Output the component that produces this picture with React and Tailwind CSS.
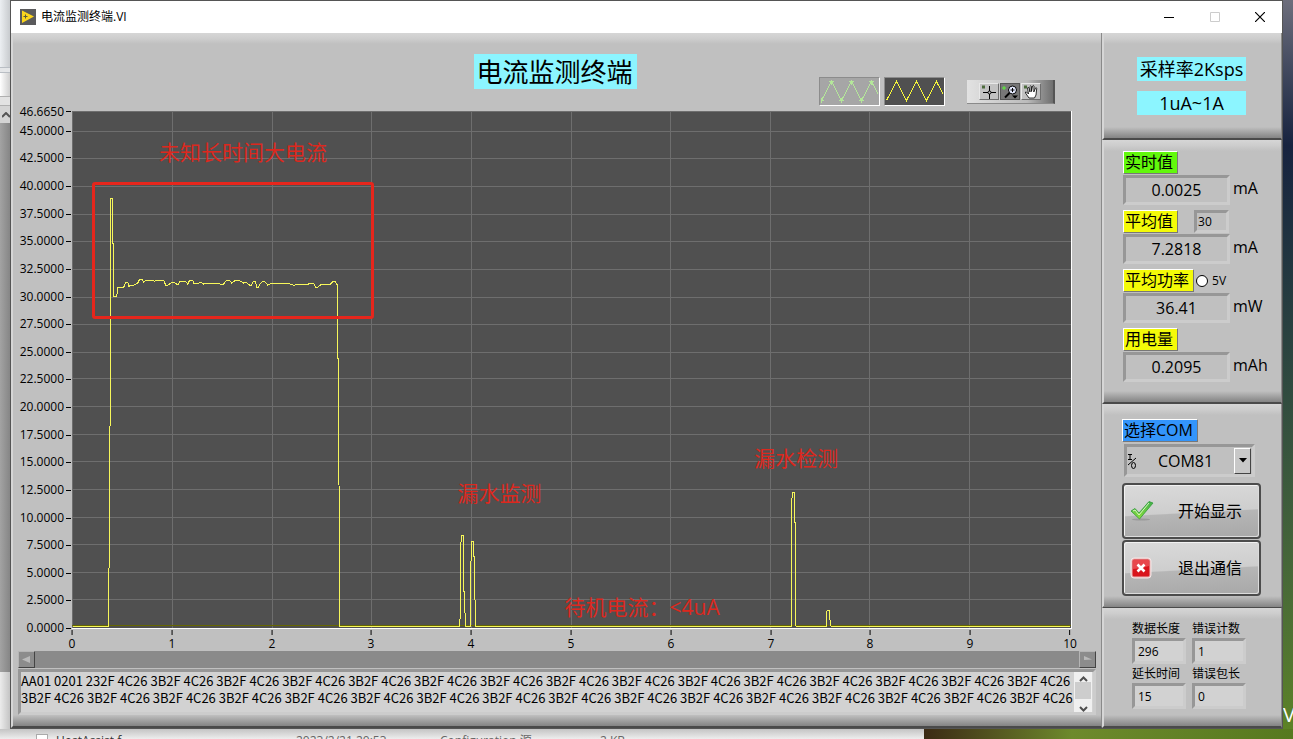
import React, { useState } from "react";

const PLOT_W = 1000;
const PLOT_H = 518;
const Y_TICKS = [
  46.665, 45, 42.5, 40, 37.5, 35, 32.5, 30, 27.5, 25, 22.5, 20, 17.5, 15, 12.5,
  10, 7.5, 5, 2.5, 0,
];
const X_TICKS = [0, 1, 2, 3, 4, 5, 6, 7, 8, 9, 10];

const plotX = (v) => Math.round(v * 99.8);
const plotY = (v) => Math.round(517 - v * 11.05);
const pctX = (x) => `${(x / PLOT_W) * 100}%`;
const pctY = (y) => `${(y / PLOT_H) * 100}%`;

const TRACE = [
  "0,516 36,516 36,494 38,210 38,87 40,87 40,132 41,132 41,185 44,185 45,176",
  "51,176 53,171 55,171 56,175 61,174 65,172 67,168 69,168 71,171 73,169 80,169",
  "82,170 85,169 91,169 93,174 95,174 100,171 101,171 104,173 106,173 107,170",
  "114,171 115,173 117,169 120,169 121,172 126,172 128,171 131,173 134,172",
  "146,172 148,173 151,173 153,170 155,169 157,169 159,172 163,169 168,170",
  "171,172 173,171 177,174 179,174 181,170 183,170 184,176 186,176 188,172",
  "191,170 193,171 195,174 199,172 206,172 215,172 221,174 230,173 235,173",
  "241,172 243,176 245,176 249,173 258,173 261,170 263,170 264,173 265,173",
  "265,247 266,247 267,516 387,516 388,503 388,442 389,425 391,425 391,481",
  "392,481 393,516 398,516 398,482 399,431 401,431 401,446 402,446 403,516",
  "719,516 719,461 720,382 722,382 722,412 723,412 723,501 724,516 754,516",
  "755,500 757,500 758,510 759,516 998,516",
].join(" ");

const NOTES = [
  { text: "未知长时间大电流", x: 87, y: 27 },
  { text: "漏水监测", x: 386, y: 369 },
  { text: "漏水检测", x: 683, y: 334 },
  { text: "待机电流：<4uA", x: 493, y: 483 },
];

const PAIRS = Array(15).fill("3B2F 4C26").join(" ");
const LOG = `AA01 0201 232F 4C26 ${PAIRS.slice(10)}\n3B2F 4C26 ${PAIRS}`;

const SUNKEN =
  "border-[3px] border-t-[#979797] border-l-[#979797] border-b-[#cccccc] border-r-[#cccccc]";

const Panel = ({ className = "", children }) => (
  <section
    className={`flex flex-col border-l-2 border-l-[#d6d6d6] border-b-2 border-b-[#4a4a4a] border-r border-r-[#8a8a8a] bg-[#c0c0c0] ${className}`}
  >
    <div className="h-[11px] shrink-0 bg-linear-to-b from-[#d6d6d6] via-[#cdcdcd] to-[#c0c0c0]" />
    <div className="flex flex-1 flex-col">{children}</div>
    <div className="h-[11px] shrink-0 bg-linear-to-b from-[#c0c0c0] to-[#848484]" />
  </section>
);

const Tag = ({ className = "", ...props }) => (
  <label
    className={`h-[23px] border border-t-white border-l-white border-r-[#777] border-b-[#777] pr-1 pl-px text-base leading-[21px] whitespace-nowrap ${className}`}
    {...props}
  />
);

const Readout = ({ id, label, color, value, unit, extra }) => (
  <div className="flex flex-col">
    <div className="flex items-center">
      <Tag htmlFor={id} className={color}>
        {label}
      </Tag>
      {extra}
    </div>
    <div className="mt-px flex items-center gap-[3px]">
      <input
        id={id}
        readOnly
        value={value}
        className={`h-[30px] w-[107px] bg-[#c0c0c0] text-center text-base outline-none ${SUNKEN}`}
      />
      <span className="mb-1 text-base leading-5">{unit}</span>
    </div>
  </div>
);

const Counter = ({ id, label, value }) => (
  <div className="flex flex-col">
    <label htmlFor={id} className="h-[19px] text-xs leading-5 whitespace-nowrap">
      {label}
    </label>
    <input
      id={id}
      readOnly
      value={value}
      className={`h-[26px] w-[54px] bg-[#d2d2d2] px-[3px] text-xs outline-none ${SUNKEN}`}
    />
  </div>
);

const BigButton = ({ icon, children }) => (
  <button
    type="button"
    className="flex h-[56px] w-[139px] items-center rounded-[4px] border-2 border-[#4c4c4c] bg-[linear-gradient(177deg,#dadada_0%,#cecece_52%,#b6b6b6_54%,#a8a8a8_100%)] pl-[6px] shadow-[inset_1px_1px_0_0_#f2f2f2,inset_-1px_-1px_0_0_#dcdcdc]"
  >
    {icon}
    <span className="ml-6 text-base">{children}</span>
  </button>
);

const CheckMark = () => (
  <svg width="24" height="22" viewBox="0 0 24 22">
    <defs>
      <linearGradient id="check" x1="0" y1="0" x2="0" y2="1">
        <stop offset="0" stopColor="#3fae4b" />
        <stop offset="1" stopColor="#8ee03c" />
      </linearGradient>
    </defs>
    <ellipse cx="11" cy="19.500" rx="9" ry="1" fill="#9a9a9a" />
    <path
      d="M1 11 L5 8.500 L9 13 L19 1.500 L23 3 L9.500 19 Z"
      fill="url(#check)"
      stroke="#2f9a37"
      strokeWidth=".8"
      strokeLinejoin="round"
    />
    <path d="M3 11 L5 10 L9 15 L19 3" fill="none" stroke="#d8f7c0" strokeWidth="1" />
  </svg>
);

const CrossMark = () => (
  <svg width="24" height="22" viewBox="0 0 24 22">
    <rect x="1" y="1" width="20" height="20" rx="3" fill="#e9b6b6" stroke="#f4e6e6" />
    <rect x="2.500" y="2.500" width="17" height="17" rx="1.500" fill="#d9141c" />
    <path d="M3 3h16v6q-8 3-16 3z" fill="#e8474c" />
    <path d="M7.500 7.500l7 7M14.500 7.500l-7 7" stroke="#fff" strokeWidth="2.600" />
  </svg>
);

const Legend = ({ label, box, stroke, markers }) => (
  <button
    type="button"
    aria-label={label}
    className={`h-[29px] w-[61px] border border-t-[#8c8c8c] border-l-[#8c8c8c] border-r-white border-b-white ${box}`}
  >
    <svg width="59" height="27" viewBox="0 0 59 27" shapeRendering="crispEdges">
      <g fill="none" stroke={stroke}>
        <path d="M1.500 22.500 L11.500 3.500 L21.500 22.500 L31.500 3.500 L41.500 22.500 L51.500 3.500 L58 16" />
        {markers && (
          <path d="M9 3.500h5M11.500 2v5M29 3.500h5M31.500 2v5M49 3.500h5M51.500 2v5M19 22.500h5M21.500 20v5M39 22.500h5M41.500 20v5M1 22.500h3M1.500 20v5M10 5.500h3M30 5.500h3M50 5.500h3" />
        )}
      </g>
    </svg>
  </button>
);

const ToolButton = ({ label, active, children }) => (
  <button
    type="button"
    aria-label={label}
    className={`h-[17px] w-5 border ${
      active
        ? "border-[#555] bg-[#777]"
        : "border-t-[#e8e8e8] border-l-[#e8e8e8] border-r-[#6e6e6e] border-b-[#6e6e6e] bg-[#c2c2c2]"
    }`}
  >
    <svg width="18" height="15" viewBox="0 0 18 15" fill="none" stroke="#000">
      {children}
    </svg>
  </button>
);

const Palette = () => (
  <div className="flex h-6 w-[88px] items-center gap-px border-r-2 border-r-[#555] border-b border-b-[#8a8a8a] bg-linear-to-r from-[#e2e2e2] via-[#bbbbbb] via-70% to-[#6f6f6f] pl-3">
    <ToolButton label="光标">
      <path d="M2 1.500h3v3H2z" fill="#4c6b3c" stroke="none" />
      <path d="M3 8.500h5M11 8.500h5M9.500 2v5M9.500 10v5" shapeRendering="crispEdges" />
      <circle cx="9.500" cy="8.500" r="1.500" />
    </ToolButton>
    <ToolButton label="缩放" active>
      <path d="M1 4h4M3 2v4" stroke="#5df03a" />
      <circle cx="11.500" cy="6" r="4" fill="#e6ebff" />
      <path d="M9.500 6h4M11.500 4v4" />
      <path d="M8.500 9L4 13.500" strokeWidth="2" />
      <path d="M11 11.500h6l-3 3z" fill="#000" stroke="none" />
    </ToolButton>
    <ToolButton label="平移">
      <path d="M2 1.500h3v3H2z" fill="#4c6b3c" stroke="none" />
      <path
        d="M7 14L3.500 9q-.5-1.500 1-1l2 2L5.500 4q.5-1.500 1.500 0l1 4V2.500q.8-1.500 1.500 0V7.500L10.500 2q1-1.200 1.500 0L11.800 8 13.500 4q1-.8 1.200.5L14 11l-1.500 3z"
        fill="#fff"
        strokeWidth=".8"
      />
    </ToolButton>
  </div>
);

const Chart = () => (
  <div className="flex min-h-[420px] flex-1 flex-col">
    <div className="flex flex-1">
      <div className="relative w-[53px] text-xs">
        {Y_TICKS.map((v) => (
          <div
            key={v}
            style={{ top: pctY(plotY(v)) }}
            className="absolute right-0 flex -translate-y-1/2 items-center gap-[2px] leading-4"
          >
            {v.toFixed(4)}
            <i className="h-px w-[5px] bg-black" />
          </div>
        ))}
      </div>
      <div className="relative ml-px flex-1 border-r border-b border-white bg-[#505050]">
        <svg
          className="absolute inset-0 h-full w-full"
          viewBox={`0 0 ${PLOT_W} ${PLOT_H}`}
          preserveAspectRatio="none"
          fill="none"
          shapeRendering="crispEdges"
        >
          <g stroke="#6e6e6e">
            <path d="M0 .5H1000M.5 0V518" vectorEffect="non-scaling-stroke" />
            {Y_TICKS.slice(1, -1).map((v) => (
              <path key={v} d={`M0 ${plotY(v) + 0.5}H1000`} vectorEffect="non-scaling-stroke" />
            ))}
            {X_TICKS.slice(1, -1).map((v) => (
              <path key={v} d={`M${plotX(v) + 0.5} 0V518`} vectorEffect="non-scaling-stroke" />
            ))}
          </g>
          <path d="M0 515.500H1000" stroke="#666600" vectorEffect="non-scaling-stroke" />
          <g transform="translate(.8 .5)">
            <polyline points={TRACE} stroke="#f6f65a" vectorEffect="non-scaling-stroke" />
          </g>
        </svg>
        <div
          style={{ left: pctX(20), top: pctY(71), width: pctX(282), height: pctY(137) }}
          className="absolute rounded-[3px] border-[3px] border-[#e6261c]"
        />
        {NOTES.map((n) => (
          <span
            key={n.text}
            style={{ left: pctX(n.x), top: pctY(n.y) }}
            className="absolute text-[21px] leading-7 whitespace-nowrap text-[#dc281e]"
          >
            {n.text}
          </span>
        ))}
      </div>
    </div>
    <div className="relative ml-[54px] h-[22px] text-xs">
      {X_TICKS.map((v) => (
        <div
          key={v}
          style={{ left: pctX(plotX(v)) }}
          className="absolute top-px flex -translate-x-1/2 flex-col items-center gap-px leading-4"
        >
          <i className="h-[5px] w-px bg-black" />
          {v}
        </div>
      ))}
    </div>
  </div>
);

const ScrollButton = ({ label, d }) => (
  <button
    type="button"
    aria-label={label}
    className="h-[17px] w-[17px] border border-t-[#b5b5b5] border-l-[#b5b5b5] border-r-[#444] border-b-[#444] bg-[#8c8c8c]"
  >
    <svg width="15" height="15" viewBox="0 0 15 15">
      <path d={d} fill="#b9b9b9" />
    </svg>
  </button>
);

const LogBox = () => (
  <div className={`mt-px flex h-[46px] bg-[#d2d2d2] ${SUNKEN}`}>
    <textarea
      readOnly
      aria-label="接收数据"
      value={LOG}
      className="h-full min-w-0 flex-1 resize-none overflow-hidden font-['Noto_Sans_CJK_SC'] text-[13px] leading-[17px] whitespace-pre outline-none"
    />
    <div className="mr-px flex w-[18px] flex-col bg-[#f0f0f0]">
      <button type="button" aria-label="向上" className="flex h-[10px] items-end justify-center">
        <svg width="9" height="6" viewBox="0 0 9 6">
          <path d="M1 5l3.500-3.500L8 5" fill="none" stroke="#505050" strokeWidth="2" />
        </svg>
      </button>
      <div className="mx-px h-[17px] bg-[#cdcdcd]" />
      <button type="button" aria-label="向下" className="flex flex-1 items-end justify-center">
        <svg width="9" height="6" viewBox="0 0 9 6">
          <path d="M1 1l3.500 3.500L8 1" fill="none" stroke="#505050" strokeWidth="2" />
        </svg>
      </button>
    </div>
  </div>
);

const TitleBar = () => (
  <header className="flex h-8 shrink-0 items-center bg-white pl-[9px]">
    <svg width="16" height="16" viewBox="0 0 16 16">
      <path d="M0 0h16v16H0z" fill="#5a5a5c" />
      <path d="M2 1.500L14 7.500L2 14z" fill="#fbd51c" />
      <path d="M3.500 7.500h4M5.500 5.500v4" stroke="#5a5a3a" />
    </svg>
    <h1 className="ml-[5px] flex-1 text-xs">电流监测终端.VI</h1>
    <div className="flex">
      <button type="button" aria-label="最小化" className="flex h-8 w-[46px] items-center justify-center">
        <svg width="10" height="10" viewBox="0 0 10 10">
          <path d="M0 5.500h10" stroke="#000" />
        </svg>
      </button>
      <button type="button" disabled aria-label="最大化" className="flex h-8 w-[46px] items-center justify-center">
        <svg width="10" height="10" viewBox="0 0 10 10">
          <path d="M.5 .5h9v9h-9z" fill="none" stroke="#ccc" />
        </svg>
      </button>
      <button type="button" aria-label="关闭" className="flex h-8 w-11 items-center justify-center">
        <svg width="10" height="10" viewBox="0 0 10 10">
          <path d="M0 0l10 10M10 0L0 10" stroke="#000" strokeWidth="1.200" />
        </svg>
      </button>
    </div>
  </header>
);

const App = () => {
  const [port, setPort] = useState("COM81");

  return (
    <div className="flex min-h-screen flex-col overflow-hidden bg-[#ececec] font-['Open_Sans','Noto_Sans_CJK_SC',sans-serif] text-black">
      <div className="flex flex-1">
        {/* Explorer window behind, left edge */}
        <div className="flex w-[10px] flex-col bg-[#a0a0a0]">
          <div className="h-[67px] bg-linear-to-r from-[#eceff2] to-[#c8cbce]" />
          <div className="h-[6px] border-y border-[#b9bec4] bg-[#e4e6e8]" />
          <div className="h-[23px] bg-linear-to-r from-white to-[#cfcfcf]" />
          <div className="h-[10px] border-y border-[#b0b0b0] bg-[#e2e2e2]" />
          <div className="flex h-[17px] items-center bg-[#d4d4d4] pl-[2px]">
            <svg width="8" height="6" viewBox="0 0 8 6">
              <path d="M0 5l4-4 4 4" fill="none" stroke="#555" strokeWidth="2" />
            </svg>
          </div>
          <div className="flex-1 bg-linear-to-r from-[#a3a3a3] to-[#868686]" />
          <div className="h-[57px] bg-linear-to-r from-[#ececec] to-[#c4c4c4]" />
        </div>

        {/* VI window */}
        <main className="flex min-w-0 flex-1 flex-col border border-[#555] bg-[#c0c0c0]">
          <TitleBar />
          <div className="flex flex-1">
            <Panel className="min-w-0 flex-1">
              <div className="mr-[5px] ml-[5px] flex flex-1 flex-col">
                <div className="mt-[10px] mb-[5px] grid h-[52px] grid-cols-[1fr_auto_1fr] pr-[3px]">
                  <h2 className="col-start-2 h-[35px] bg-[#8cf5ff] pr-1 pl-[2px] text-[26px] leading-[37px]">
                    电流监测终端
                  </h2>
                  <div className="mr-[38px] flex items-end justify-end gap-1">
                    <Legend label="曲线 1" box="bg-[#a6a6a6]" stroke="#b4e69a" markers />
                    <Legend label="曲线 2" box="bg-[#505050]" stroke="#f6f63c" />
                    <div className="mb-[2px] ml-[18px]">
                      <Palette />
                    </div>
                  </div>
                </div>
                <div className="mr-6 flex flex-1">
                  <Chart />
                </div>
                <div className="flex h-[17px] justify-between bg-[#8a8a8a]">
                  <ScrollButton label="向左滚动" d="M3 7.500L11 4v7z" />
                  <ScrollButton label="向右滚动" d="M12 7.500L4 4v4z" />
                </div>
                <LogBox />
              </div>
            </Panel>

            <aside className="flex w-[180px] shrink-0 flex-col">
              <Panel className="h-[107px]">
                <div className="flex flex-col items-center gap-[10px] pt-[13px] pr-[2px] text-center">
                  <div className="h-6 w-[109px] bg-[#8cf5ff] text-lg leading-6">采样率2Ksps</div>
                  <div className="h-6 w-[109px] bg-[#8cf5ff] text-lg leading-6">1uA~1A</div>
                </div>
              </Panel>

              <Panel className="h-[264px]">
                <div className="flex flex-col gap-[5px] pl-[19px]">
                  <Readout id="now" label="实时值" color="bg-[#62f80c]" value="0.0025" unit="mA" />
                  <Readout
                    id="avg"
                    label="平均值"
                    color="bg-[#f4fb08]"
                    value="7.2818"
                    unit="mA"
                    extra={
                      <input
                        readOnly
                        aria-label="平均次数"
                        value="30"
                        className={`ml-4 h-[23px] w-[35px] bg-[#c0c0c0] px-px text-xs outline-none ${SUNKEN}`}
                      />
                    }
                  />
                  <Readout
                    id="power"
                    label="平均功率"
                    color="bg-[#f4fb08]"
                    value="36.41"
                    unit="mW"
                    extra={
                      <label className="ml-[2px] flex items-center gap-1 text-xs">
                        <input
                          type="radio"
                          name="volt"
                          className="h-3 w-3 appearance-none rounded-full border border-black bg-white checked:bg-[#333]"
                        />
                        5V
                      </label>
                    }
                  />
                  <Readout id="used" label="用电量" color="bg-[#f4fb08]" value="0.2095" unit="mAh" />
                </div>
              </Panel>

              <Panel className="h-[204px]">
                <div className="flex flex-col items-start gap-[2px] pt-1 pl-[18px]">
                  <Tag htmlFor="com" className="bg-[#3395fb]">
                    选择COM
                  </Tag>
                  <div className={`ml-[2px] flex h-[33px] w-[131px] items-center pr-px ${SUNKEN}`}>
                    <svg width="10" height="20" viewBox="0 0 10 20" fill="none" stroke="#000">
                      <path d="M1 3.500h4M3 3.500v5M1 8.500h4M1 14L9 7" />
                      <ellipse cx="6.500" cy="14.500" rx="2" ry="3" />
                    </svg>
                    <select
                      id="com"
                      value={port}
                      onChange={(e) => setPort(e.target.value)}
                      className="h-full min-w-0 flex-1 appearance-none text-center text-base outline-none"
                    >
                      <option>COM81</option>
                    </select>
                    <span className="flex h-[26px] w-[17px] items-center justify-center border border-t-white border-l-white border-r-[#444] border-b-[#444] bg-[#c8c8c8]">
                      <svg width="8" height="5" viewBox="0 0 8 5">
                        <path d="M0 0h8L4 4.500z" />
                      </svg>
                    </span>
                  </div>
                  <div className="mt-1 flex flex-col gap-px">
                    <BigButton icon={<CheckMark />}>开始显示</BigButton>
                    <BigButton icon={<CrossMark />}>退出通信</BigButton>
                  </div>
                </div>
              </Panel>

              <Panel className="flex-1">
                <div className="grid grid-cols-[54px_54px] gap-x-[6px] pl-7">
                  <Counter id="len" label="数据长度" value="296" />
                  <Counter id="err" label="错误计数" value="1" />
                  <Counter id="delay" label="延长时间" value="15" />
                  <Counter id="errlen" label="错误包长" value="0" />
                </div>
              </Panel>
            </aside>
          </div>
        </main>

        {/* Desktop wallpaper, right edge */}
        <div className="flex w-[10px] items-end overflow-hidden bg-linear-to-b from-[#6d6e7c] from-0% via-[#17233f] via-20% to-[#5c8226] to-100%">
          <span className="text-xl text-white">V</span>
        </div>
      </div>

      <footer className="flex h-[10px] overflow-hidden text-xs leading-4 text-[#333]">
        <div className="flex w-[924px] shrink-0 bg-linear-to-b from-[#c4c4c4] to-[#eeeeee] pt-1 pl-9">
          <i className="mt-px mr-2 h-4 w-3 border border-[#aaa] bg-white" />
          <span className="w-60">HostAssist.f</span>
          <span className="w-36 text-[#666]">2023/2/21 20:53</span>
          <span className="w-40 text-[#666]">Configuration 源...</span>
          <span className="text-[#666]">2 KB</span>
        </div>
        <div className="flex-1 bg-linear-to-r from-[#3b2a14] via-[#6d8a2c] via-40% to-[#56791f]" />
      </footer>
    </div>
  );
};

export default App;
